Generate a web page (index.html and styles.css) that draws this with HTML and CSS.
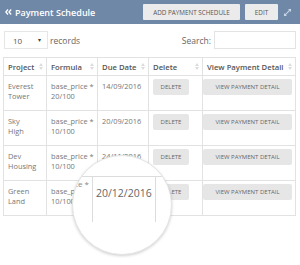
FILE: index.html
```html
<!DOCTYPE html>
<html>

<head>
  <title>Payment Schedule</title>
  <link rel="stylesheet" href="styles.css">
</head>

<body>
  <div class="panel-heading">
    <div class="panel-title">
      <svg class="back-icon" width="7" height="6" viewBox="0 0 7 6">
        <path d="M3 0.5 L0.8 3 L3 5.5 M6.2 0.5 L4 3 L6.2 5.5" fill="none" stroke="#fff" stroke-width="1.3"/>
      </svg>
      Payment Schedule
    </div>
    <button class="head-button add-button">ADD PAYMENT SCHEDULE</button>
    <button class="head-button edit-button">EDIT</button>
    <svg class="expand-icon" width="9" height="9" viewBox="0 0 9 9">
      <path d="M1.2 7.8 L7.8 1.2" stroke="#c9d6e6" stroke-width="1.1"/>
      <path d="M5 1 L8 1 L8 4 Z M1 5 L1 8 L4 8 Z" fill="#c9d6e6"/>
    </svg>
  </div>

  <div class="table-controls">
    <div class="length-select">
      <span>10</span>
      <span class="caret">&#9662;</span>
    </div>
    <span class="records-label">records</span>
    <span class="search-label">Search:</span>
    <div class="search-input"></div>
  </div>

  <table class="schedule-table">
    <thead>
      <tr>
        <th class="col-project">Project<span class="sort"></span></th>
        <th class="col-formula">Formula<span class="sort"></span></th>
        <th class="col-date">Due Date<span class="sort"></span></th>
        <th class="col-delete">Delete<span class="sort"></span></th>
        <th class="col-view">View Payment Detail<span class="sort"></span></th>
      </tr>
    </thead>
    <tbody>
      <tr>
        <td>Everest<br>Tower</td>
        <td>base_price *<br>20/100</td>
        <td>14/09/2016</td>
        <td class="button-cell"><button class="row-button delete-button">DELETE</button></td>
        <td class="button-cell"><button class="row-button view-button">VIEW PAYMENT DETAIL</button></td>
      </tr>
      <tr>
        <td>Sky<br>High</td>
        <td>base_price *<br>10/100</td>
        <td>20/09/2016</td>
        <td class="button-cell"><button class="row-button delete-button">DELETE</button></td>
        <td class="button-cell"><button class="row-button view-button">VIEW PAYMENT DETAIL</button></td>
      </tr>
      <tr>
        <td>Dev<br>Housing</td>
        <td>base_price *<br>10/100</td>
        <td>24/11/2016</td>
        <td class="button-cell"><button class="row-button delete-button">DELETE</button></td>
        <td class="button-cell"><button class="row-button view-button">VIEW PAYMENT DETAIL</button></td>
      </tr>
      <tr>
        <td>Green<br>Land</td>
        <td>base_price *<br>10/100</td>
        <td>20/12/2016</td>
        <td class="button-cell"><button class="row-button delete-button">DELETE</button></td>
        <td class="button-cell"><button class="row-button view-button">VIEW PAYMENT DETAIL</button></td>
      </tr>
    </tbody>
  </table>

  <!-- magnifier over the last due date -->
  <div class="lens">
    <div class="lens-grid">
      <div class="lens-cell lens-formula">ice *</div>
      <div class="lens-cell lens-date">20/12/2016</div>
      <div class="lens-cell lens-delete"></div>
    </div>
  </div>
</body>

</html>
```

FILE: styles.css
```css
body {
  margin: 0;
  width: 300px;
  height: 265px;
  overflow: hidden;
  background: #fff;
  font-family: "Open Sans", "DejaVu Sans", sans-serif;
  color: #666;
  position: relative;
}

.panel-heading {
  height: 24px;
  background-color: #6f88a8;
  display: flex;
  align-items: center;
  padding: 0 8px 0 5px;
}

.panel-title {
  color: #fff;
  font-size: 9px;
  font-weight: 600;
  display: flex;
  align-items: center;
  gap: 2px;
  flex: 1;
}

.back-icon {
  margin-right: 1px;
}

.head-button {
  height: 16px;
  border: none;
  border-radius: 1px;
  background: #ebebeb;
  color: #555;
  font-family: "Open Sans", sans-serif;
  font-size: 6.3px;
  padding: 0;
}

.add-button {
  width: 97px;
}

.edit-button {
  width: 33px;
  margin-left: 5px;
}

.expand-icon {
  margin-left: 5px;
}

.table-controls {
  display: flex;
  align-items: center;
  padding: 7px 4px 0 4px;
  height: 18px;
}

.length-select {
  width: 44px;
  height: 18px;
  box-sizing: border-box;
  border: 1px solid #e6e6e6;
  display: flex;
  align-items: center;
  justify-content: space-between;
  padding: 0 6px 0 8px;
  font-size: 8px;
  color: #555;
}

.caret {
  font-size: 6px;
  color: #444;
}

.records-label {
  font-size: 8.5px;
  margin-left: 2px;
  flex: 1;
}

.search-label {
  font-size: 8.5px;
  margin-right: 3px;
}

.search-input {
  width: 82px;
  height: 18px;
  box-sizing: border-box;
  border: 1px solid #e3e3e3;
}

.schedule-table {
  margin: 8px 0 0 3px;
  width: 293px;
  border-collapse: collapse;
  table-layout: fixed;
  font-size: 7.4px;
}

.schedule-table th,
.schedule-table td {
  border: 1px solid #e2e2e2;
  text-align: left;
  vertical-align: top;
}

.schedule-table th {
  height: 17px;
  padding: 0 0 0 4px;
  vertical-align: middle;
  font-size: 7.7px;
  font-weight: 600;
  color: #555;
  white-space: nowrap;
  position: relative;
}

.schedule-table td {
  height: 35px;
  box-sizing: border-box;
  padding: 5px 1px 0 4px;
  line-height: 10px;
  color: #777;
  white-space: nowrap;
}

.col-project {
  width: 38px;
}

.col-formula {
  width: 46px;
}

.col-date {
  width: 46px;
}

.col-delete {
  width: 49px;
}

.sort {
  position: absolute;
  right: 3px;
  top: 5px;
  width: 0;
  height: 0;
  border-left: 2px solid transparent;
  border-right: 2px solid transparent;
  border-bottom: 3px solid #dcdcdc;
}

.sort::after {
  content: "";
  position: absolute;
  left: -2px;
  top: 4px;
  border-left: 2px solid transparent;
  border-right: 2px solid transparent;
  border-top: 3px solid #dcdcdc;
}

.button-cell {
  text-align: center;
}

.schedule-table td.button-cell {
  padding: 3px 0 0 0;
}

.row-button {
  height: 16px;
  border: none;
  border-radius: 2px;
  background: #e6e6e6;
  color: #666;
  font-family: "Open Sans", sans-serif;
  font-size: 6px;
  padding: 0;
}

.delete-button {
  width: 36px;
  margin-left: 4px;
}

.view-button {
  width: 89px;
  margin-right: 5px;
}

.lens {
  position: absolute;
  left: 72px;
  top: 155px;
  width: 98px;
  height: 98px;
  border-radius: 50%;
  background: #fff;
  border: 1px solid #e4e4e4;
  box-shadow: 0 1px 3px rgba(0, 0, 0, 0.18);
  overflow: hidden;
}

.lens-grid {
  display: grid;
  grid-template-columns: 60px 63px 40px;
  margin: 20px 0 0 -40px;
  height: 45px;
  border-top: 1px solid #dcdcdc;
}

.lens-cell {
  border-right: 1px solid #dcdcdc;
}

.lens-formula {
  text-align: right;
  padding: 1px 3px 0 0;
  font-size: 8px;
  color: #888;
  white-space: nowrap;
  overflow: hidden;
}

.lens-date {
  font-size: 10.5px;
  color: #666;
  padding: 9px 0 0 3px;
}

.lens-delete {
  border-right: none;
}
```
